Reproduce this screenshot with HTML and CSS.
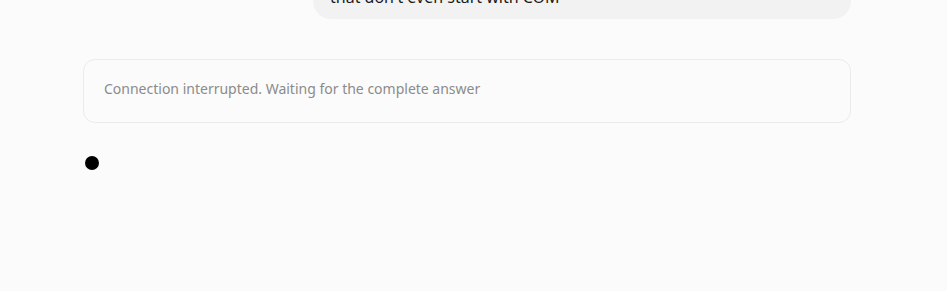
FILE: index.html
```html
<!DOCTYPE html>
<html>
<head>
<meta charset="utf-8">
<link rel="stylesheet" href="styles.css">
</head>
<body>
<main class="thread">
  <div class="user-row">
    <div class="bubble">Why are there so many commands in this list<br>that don't even start with COM</div>
  </div>
  <div class="notice">Connection interrupted. Waiting for the complete answer</div>
  <div class="cursor-dot"></div>
</main>
</body>
</html>
```
FILE: styles.css
```css
html, body {
  margin: 0;
  padding: 0;
  background: #fbfbfb;
}
body {
  font-family: "Noto Sans", "Open Sans", sans-serif;
  height: 291px;
  overflow: hidden;
}
.thread {
  display: flex;
  flex-direction: column;
  padding: 0 96px 0 83px;
  margin-top: -49px;
}
.user-row {
  display: flex;
  justify-content: flex-end;
}
.bubble {
  width: 538px;
  box-sizing: border-box;
  background: #f2f2f2;
  border-radius: 18px;
  padding: 10px 17px;
  font-size: 16px;
  line-height: 24px;
  color: #1a1a1a;
}
.notice {
  margin-top: 40px;
  border: 1px solid #ebebeb;
  border-radius: 12px;
  padding: 18px 20px 22px;
  font-size: 14px;
  line-height: 22px;
  color: #8b8b8b;
  background: #fbfbfb;
}
.cursor-dot {
  margin-top: 33px;
  margin-left: 2px;
  width: 14px;
  height: 14px;
  border-radius: 50%;
  background: #000;
}
```
